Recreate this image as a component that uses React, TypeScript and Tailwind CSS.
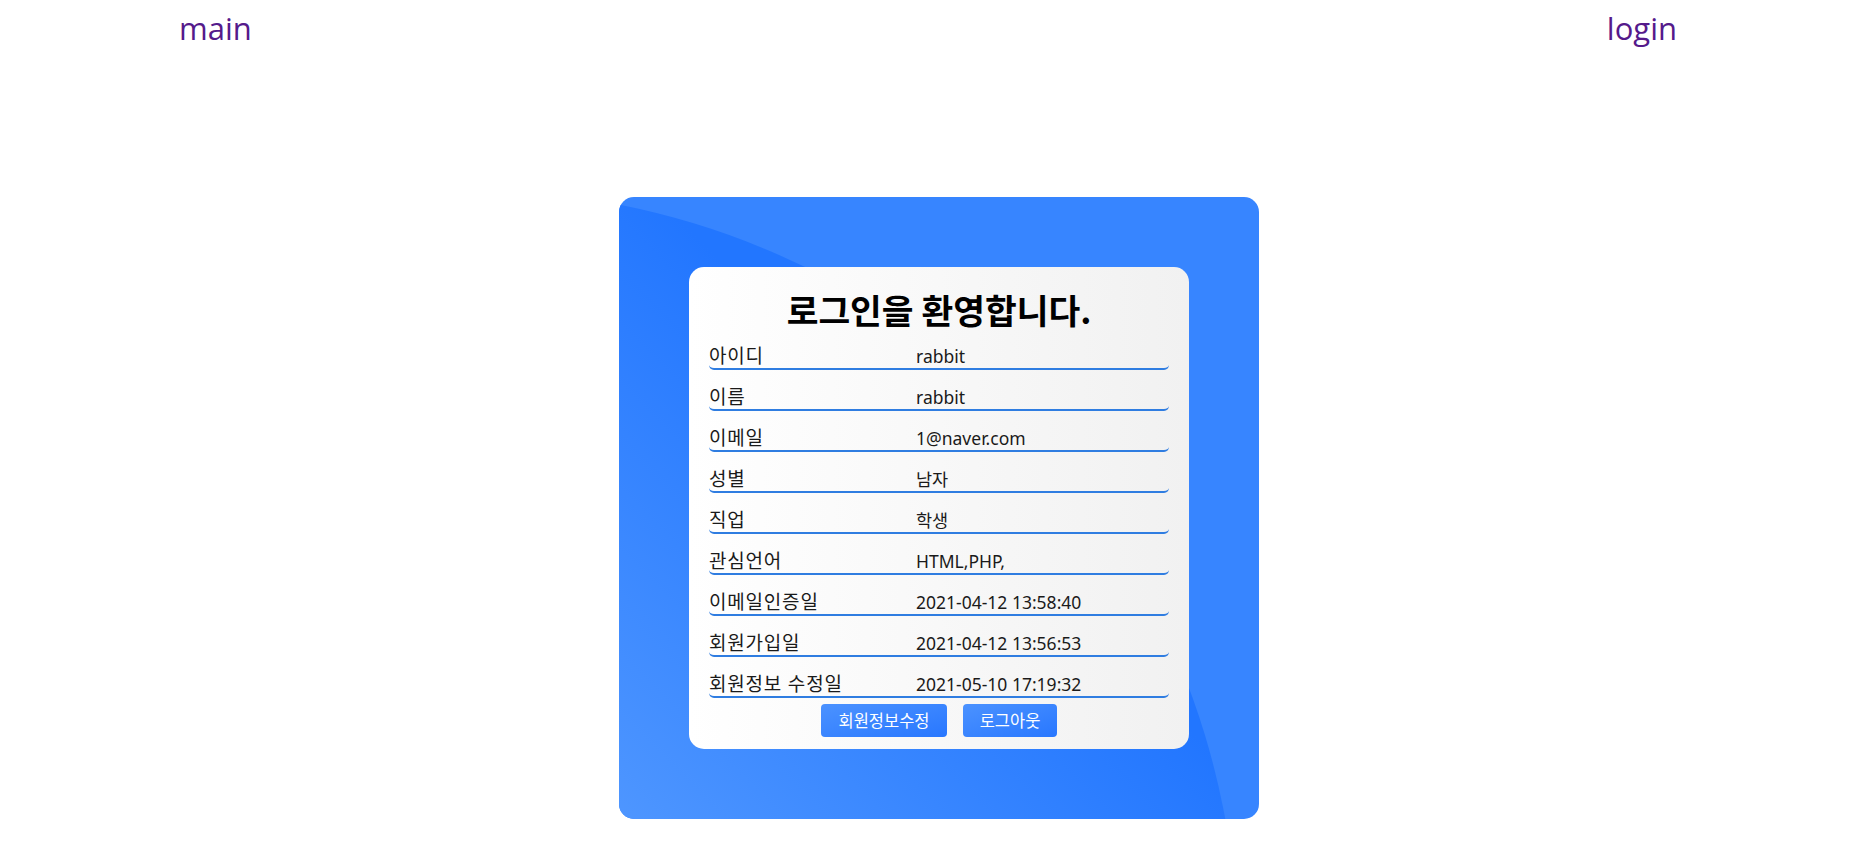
import React from "react";

const rows: [string, string][] = [
  ["아이디", "rabbit"],
  ["이름", "rabbit"],
  ["이메일", "1@naver.com"],
  ["성별", "남자"],
  ["직업", "학생"],
  ["관심언어", "HTML,PHP,"],
  ["이메일인증일", "2021-04-12 13:58:40"],
  ["회원가입일", "2021-04-12 13:56:53"],
  ["회원정보 수정일", "2021-05-10 17:19:32"],
];

export default function App() {
  return (
    <div className="min-h-screen bg-white">
      <header className="flex h-[56px] items-center justify-between pl-[179px] pr-[186px] font-['Open_Sans','Noto_Sans_CJK_KR',sans-serif] text-[31px] leading-[40px] text-[#551a8b]">
        <a href="#" className="text-[#551a8b]">main</a>
        <a href="#" className="text-[#551a8b]">login</a>
      </header>
      <div className="relative ml-[619px] mt-[141px] h-[622px] w-[640px] overflow-hidden rounded-[15px] bg-[#3785ff] p-[70px]">
        <svg className="absolute inset-0" width="640" height="622" viewBox="0 0 640 622">
          <defs>
            <linearGradient id="g" gradientUnits="userSpaceOnUse" x1="0" y1="622" x2="330" y2="292">
              <stop offset="0" stopColor="#4e96ff" />
              <stop offset="1" stopColor="#2276ff" />
            </linearGradient>
          </defs>
          <circle cx="-149" cy="761" r="768" fill="url(#g)" />
        </svg>
        <div className="relative flex h-[482px] w-[500px] flex-col rounded-[15px] bg-linear-to-r from-white to-[#f1f1f1] px-[20px] pt-[22px]">
          <h1 className="h-[40px] text-center font-['Noto_Sans_CJK_KR',sans-serif] text-[34.5px] font-bold leading-[40px] text-black">
            로그인을 환영합니다.
          </h1>
          <div className="flex flex-col">
            {rows.map(([k, v]) => (
              <div
                key={k}
                className="flex h-[41px] items-end rounded-b-[5px] border-b-2 border-[#2f7de1] font-['Noto_Sans','Noto_Sans_CJK_KR',sans-serif] leading-[24px] text-[#1a1a1a]"
              >
                <span className="w-[207px] text-[19px] tracking-[0.8px]">{k}</span>
                <span className="text-[17.5px]">{v}</span>
              </div>
            ))}
          </div>
          <div className="mt-[6px] flex justify-center gap-[16px] font-['Noto_Sans_CJK_KR',sans-serif]">
            <button className="h-[33px] w-[126px] rounded-[4px] bg-linear-to-br from-[#4b92ff] to-[#2877ff] text-[16.5px] text-white">
              회원정보수정
            </button>
            <button className="h-[33px] w-[94px] rounded-[4px] bg-linear-to-br from-[#4b92ff] to-[#2877ff] text-[16.5px] text-white">
              로그아웃
            </button>
          </div>
        </div>
      </div>
    </div>
  );
}
